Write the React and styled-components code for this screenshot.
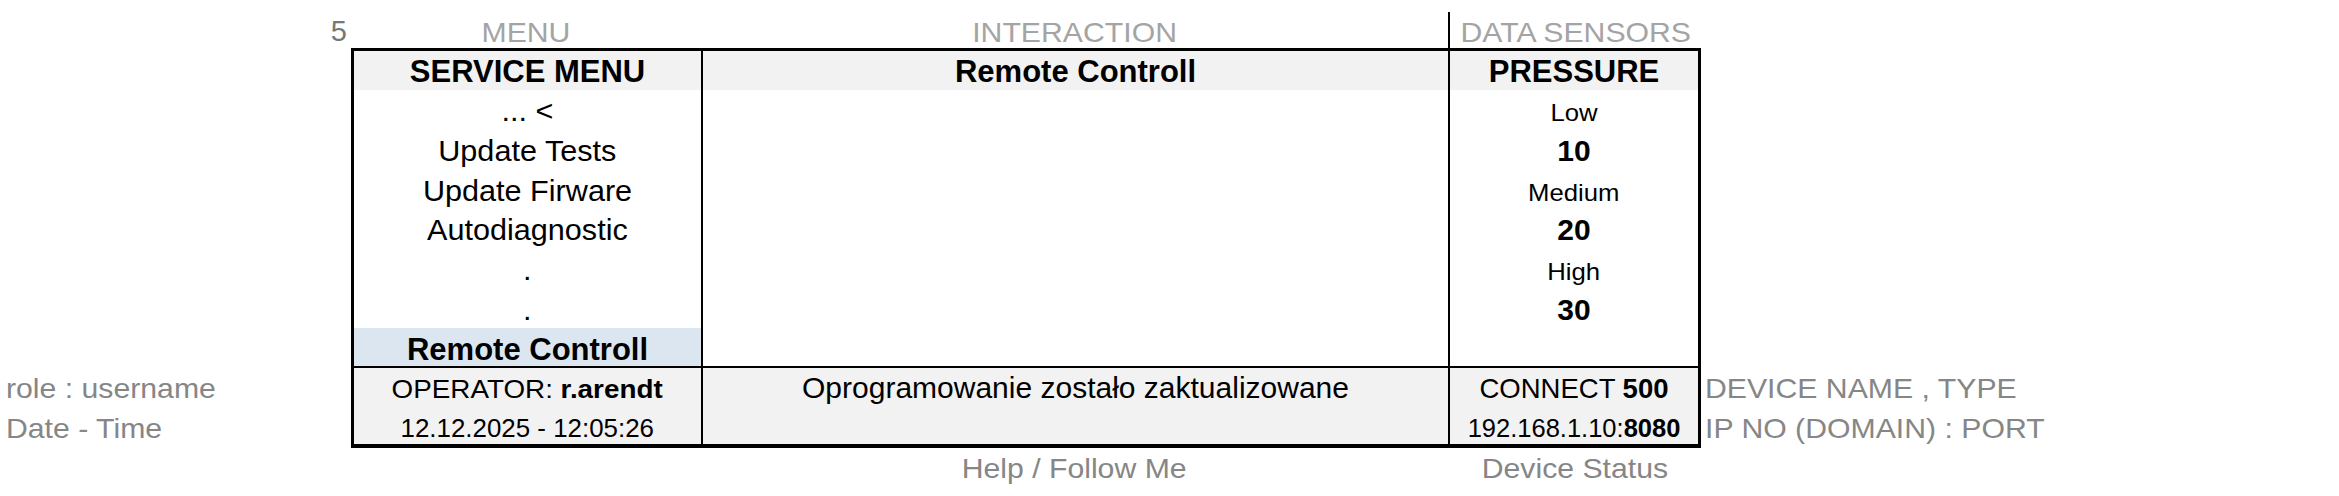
import React from 'react';
import styled, { createGlobalStyle } from 'styled-components';

const GlobalStyle = createGlobalStyle`
    html, body {
        margin: 0;
        padding: 0;
        background: #fff;
    }
    body {
        font-family: "Liberation Sans", Arial, sans-serif;
        color: #000;
    }
`;

const Sheet = styled.div`
    display: grid;
    grid-template-columns: 351px 1350px 1fr;
    grid-template-rows: 36px 320px 80px 40px;
    grid-template-areas:
        "num top ."
        ". table ."
        "left table right"
        ". bottom .";
    padding-top: 12px;
    width: 2339px;
`;

// one line of text, sitting on a baseline $base px above the bottom of its slot
const Text = styled.span`
    display: block;
    font-size: ${p => p.$size}px;
    line-height: 1;
    font-weight: ${p => (p.$bold ? 700 : 400)};
    color: ${p => p.$color || '#000'};
    white-space: nowrap;
    transform: scaleX(${p => p.$sx || 1});
    transform-origin: ${p => p.$origin || 'center'} bottom;
    margin-bottom: ${p => ((p.$base ?? 8) - 0.1535 * p.$size).toFixed(2)}px;
`;

const Strong = styled.b`
    font-weight: 700;
`;

const RowNumber = styled.div`
    grid-area: num;
    display: flex;
    justify-content: flex-end;
    align-items: flex-end;
    padding-right: 4px;
`;

const CaptionRow = styled.div`
    grid-area: ${p => p.$area};
    display: grid;
    grid-template-columns: 350px 747px 1fr;
`;

const Caption = styled.div`
    display: flex;
    justify-content: center;
    align-items: flex-end;
    border-left: ${p => (p.$divider ? '2px solid #000' : 'none')};
`;

const Table = styled.div`
    grid-area: table;
    border: 3px solid #000;
    border-bottom-width: 4px;
    display: flex;
    flex-direction: column;
`;

const Section = styled.div`
    display: grid;
    grid-template-columns: 347px 747px 1fr;
    border-top: ${p => (p.$footer ? '2px solid #000' : 'none')};
    background: ${p => (p.$footer ? '#f2f2f2' : 'transparent')};
`;

const Column = styled.div`
    display: flex;
    flex-direction: column;
    border-left: ${p => (p.$divider ? '2px solid #000' : 'none')};
`;

const Cell = styled.div`
    height: ${p => p.$h || '39.667px'};
    display: flex;
    justify-content: center;
    align-items: flex-end;
    background: ${p => p.$bg || 'transparent'};
`;

const Notes = styled.div`
    grid-area: ${p => p.$area};
    display: flex;
    flex-direction: column;
    padding-left: ${p => p.$pad};
`;

const Note = styled.div`
    height: 38px;
    display: flex;
    align-items: flex-end;
`;

const GRAY = '#a4a4a4';
const DARK_GRAY = '#868686';
const HEAD = { $size: 31, $bold: true };
const CAPTION = { $size: 28.5, $sx: 1.06, $color: GRAY, $base: 6 };
const NOTE = { $size: 28.5, $sx: 1.06, $color: DARK_GRAY, $origin: 'left' };

const menuItems = ['... <', 'Update Tests', 'Update Firware', 'Autodiagnostic', '.', '.'];

const sensors = [
    { text: 'Low' },
    { text: '10', bold: true },
    { text: 'Medium' },
    { text: '20', bold: true },
    { text: 'High' },
    { text: '30', bold: true },
];

const App = () => {
    return (
        <Sheet>
            <GlobalStyle />
            <RowNumber>
                <Text $size={29} $color="#777" $base={6}>5</Text>
            </RowNumber>
            <CaptionRow $area="top">
                <Caption><Text {...CAPTION}>MENU</Text></Caption>
                <Caption><Text {...CAPTION}>INTERACTION</Text></Caption>
                <Caption $divider><Text {...CAPTION}>DATA SENSORS</Text></Caption>
            </CaptionRow>

            <Table>
                <Section>
                    <Column>
                        <Cell $h="39px" $bg="#f2f2f2"><Text {...HEAD}>SERVICE MENU</Text></Cell>
                        {menuItems.map((item, i) => (
                            <Cell key={i}><Text $size={30} $sx={1.02}>{item}</Text></Cell>
                        ))}
                        <Cell $h="38px" $bg="#dce6f1"><Text {...HEAD} $base={5.5}>Remote Controll</Text></Cell>
                    </Column>
                    <Column $divider>
                        <Cell $h="39px" $bg="#f2f2f2"><Text {...HEAD}>Remote Controll</Text></Cell>
                    </Column>
                    <Column $divider>
                        <Cell $h="39px" $bg="#f2f2f2"><Text {...HEAD}>PRESSURE</Text></Cell>
                        {sensors.map((s, i) => (
                            <Cell key={i}>
                                {s.bold
                                    ? <Text $size={30} $bold>{s.text}</Text>
                                    : <Text $size={24} $sx={1.07}>{s.text}</Text>}
                            </Cell>
                        ))}
                    </Column>
                </Section>
                <Section $footer>
                    <Column>
                        <Cell $h="38px"><Text $size={26.5} $sx={1.05} $base={7.5}>OPERATOR: <Strong>r.arendt</Strong></Text></Cell>
                        <Cell $h="38px"><Text $size={25.4} $sx={1.02} $base={6}>12.12.2025 - 12:05:26</Text></Cell>
                    </Column>
                    <Column $divider>
                        <Cell $h="38px"><Text $size={30} $base={8}>Oprogramowanie zostało zaktualizowane</Text></Cell>
                    </Column>
                    <Column $divider>
                        <Cell $h="38px"><Text $size={27.5} $base={7.5}>CONNECT <Strong>500</Strong></Text></Cell>
                        <Cell $h="38px"><Text $size={25.5} $base={6}>192.168.1.10:<Strong>8080</Strong></Text></Cell>
                    </Column>
                </Section>
            </Table>

            <Notes $area="left" $pad="6px">
                <Note><Text {...NOTE} $base={7.5}>role : username</Text></Note>
                <Note><Text {...NOTE} $base={6}>Date - Time</Text></Note>
            </Notes>
            <Notes $area="right" $pad="4px">
                <Note><Text {...NOTE} $base={7.5}>DEVICE NAME , TYPE</Text></Note>
                <Note><Text {...NOTE} $base={6}>IP NO (DOMAIN) : PORT</Text></Note>
            </Notes>

            <CaptionRow $area="bottom">
                <span />
                <Caption><Text {...CAPTION} $color={DARK_GRAY} $base={9.5}>Help / Follow Me</Text></Caption>
                <Caption><Text {...CAPTION} $color={DARK_GRAY} $base={9.5}>Device Status</Text></Caption>
            </CaptionRow>
        </Sheet>
    );
};

export default App;
